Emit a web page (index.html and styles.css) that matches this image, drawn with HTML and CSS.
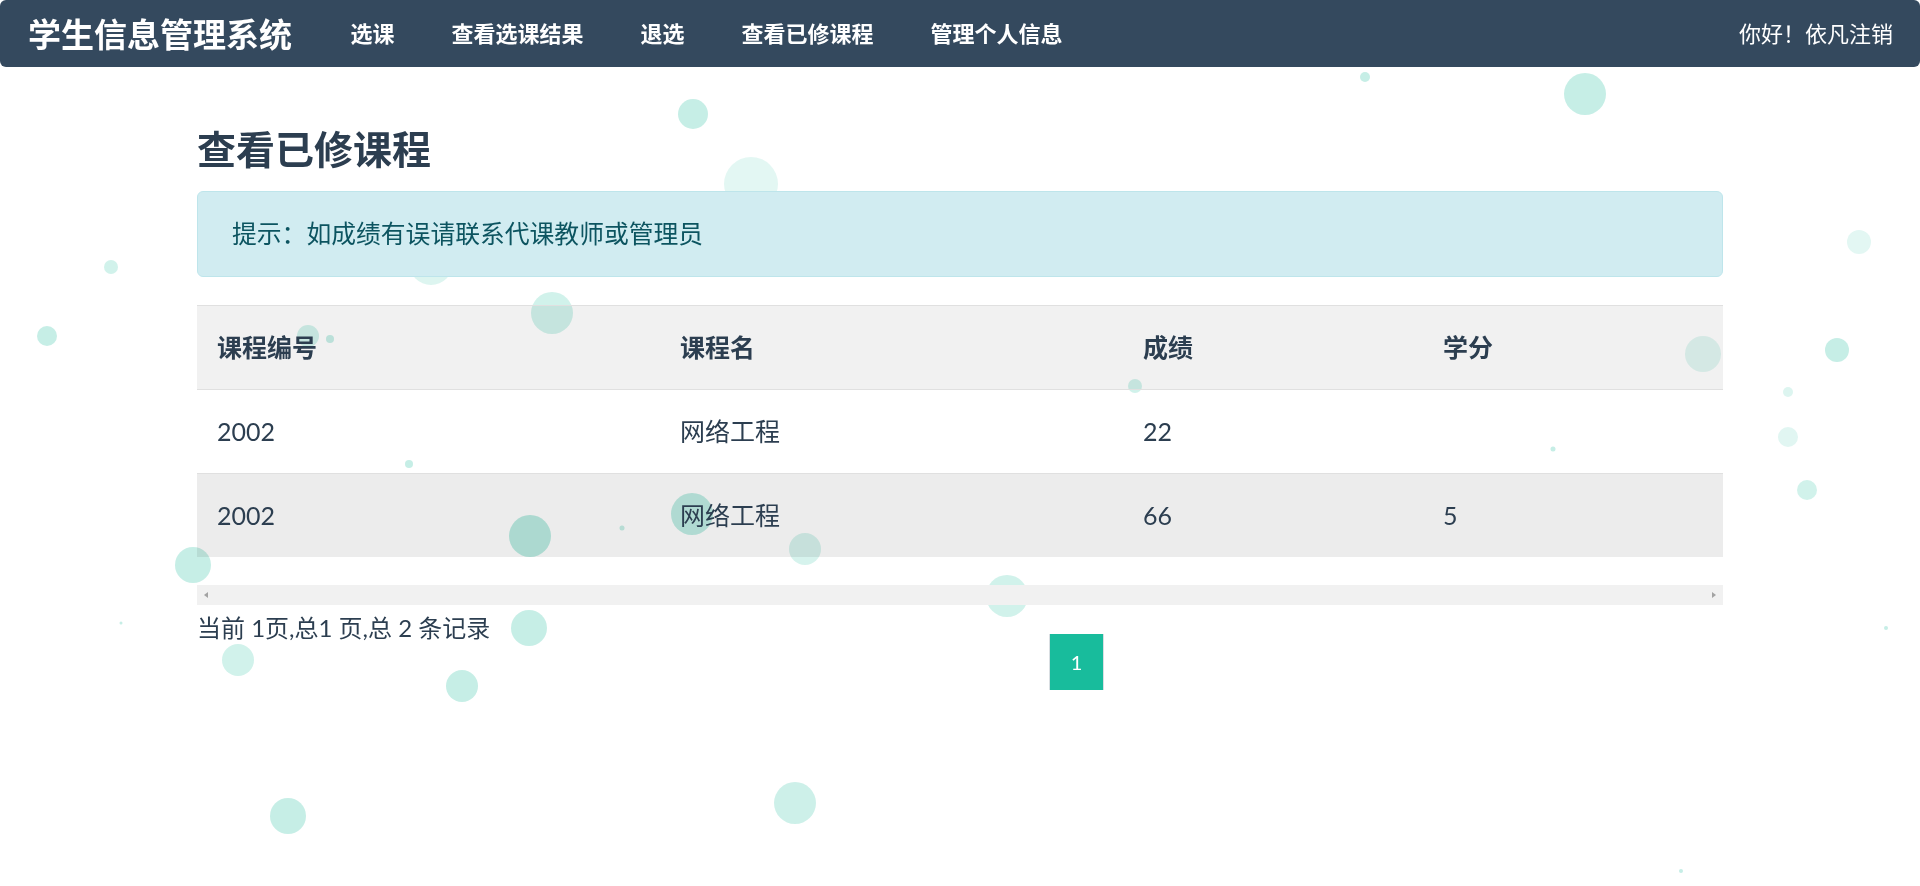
FILE: index.html
```html
<!DOCTYPE html>
<html lang="zh-CN">
<head>
<meta charset="utf-8">
<title>查看已修课程</title>
<link rel="stylesheet" href="styles.css">
</head>
<body>
<div class="bubbles" aria-hidden="true">
  <span class="bubble b1"></span><span class="bubble b2"></span><span class="bubble b3"></span>
  <span class="bubble b4"></span><span class="bubble b5"></span><span class="bubble b6"></span>
  <span class="bubble b7"></span><span class="bubble b8"></span><span class="bubble b9"></span>
  <span class="bubble b10"></span><span class="bubble b11"></span><span class="bubble b12"></span>
  <span class="bubble b13"></span><span class="bubble b14"></span><span class="bubble b15"></span>
  <span class="bubble b16"></span><span class="bubble b17"></span><span class="bubble b18"></span>
  <span class="bubble b19"></span><span class="bubble b20"></span><span class="bubble b21"></span>
  <span class="bubble b22"></span><span class="bubble b23"></span><span class="bubble b24"></span>
  <span class="bubble b25"></span><span class="bubble b26"></span><span class="bubble b27"></span>
  <span class="bubble b28"></span><span class="bubble b29"></span><span class="bubble b30"></span>
  <span class="bubble b31"></span><span class="bubble b32"></span><span class="bubble b33"></span>
</div>

<nav class="navbar">
  <a class="brand" href="#">学生信息管理系统</a>
  <ul class="nav">
    <li><a href="#">选课</a></li>
    <li><a href="#">查看选课结果</a></li>
    <li><a href="#">退选</a></li>
    <li><a href="#">查看已修课程</a></li>
    <li><a href="#">管理个人信息</a></li>
  </ul>
  <div class="user">你好！依凡<a href="#" class="logout">注销</a></div>
</nav>

<main class="container">
  <h2 class="title">查看已修课程</h2>
  <div class="alert">提示：如成绩有误请联系代课教师或管理员</div>

  <div class="table-wrap">
    <table class="table">
      <colgroup>
        <col class="c1"><col class="c2"><col class="c3"><col class="c4">
      </colgroup>
      <thead>
        <tr><th>课程编号</th><th>课程名</th><th>成绩</th><th>学分</th></tr>
      </thead>
      <tbody>
        <tr><td>2002</td><td>网络工程</td><td>22</td><td></td></tr>
        <tr class="alt"><td>2002</td><td>网络工程</td><td>66</td><td>5</td></tr>
      </tbody>
    </table>
  </div>
  <div class="scrollbar"><span class="arrow left"></span><span class="arrow right"></span></div>

  <div class="pager-row">
    <div class="pager-info">当前 1页,总1 页,总 2 条记录</div>
    <ul class="pagination">
      <li class="active"><a href="#">1</a></li>
    </ul>
  </div>
</main>
</body>
</html>
```

FILE: styles.css
```css
* { box-sizing: border-box; }
html, body { margin: 0; padding: 0; }
body {
  font-family: Lato, "Noto Sans CJK SC", sans-serif;
  font-size: 25px;
  color: #2c3e50;
  background: #fff;
}

/* decorative floating bubbles behind the page */
.bubbles {
  position: fixed;
  inset: 0;
  z-index: -1;
  overflow: hidden;
  pointer-events: none;
}
.bubble {
  position: absolute;
  border-radius: 50%;
  background: rgba(26, 188, 156, 0.25);
  transform: translate(-50%, -50%);
}
.b1  { left: 693px;  top: 114px; width: 30px; height: 30px; }
.b2  { left: 1585px; top: 94px;  width: 42px; height: 42px; }
.b3  { left: 1365px; top: 77px;  width: 10px; height: 10px; }
.b4  { left: 751px;  top: 184px; width: 54px; height: 54px; background: rgba(26,188,156,.12); }
.b5  { left: 431px;  top: 263px; width: 44px; height: 44px; background: rgba(26,188,156,.15); }
.b6  { left: 111px;  top: 267px; width: 14px; height: 14px; background: rgba(26,188,156,.2); }
.b7  { left: 47px;   top: 336px; width: 20px; height: 20px; }
.b8  { left: 552px;  top: 313px; width: 42px; height: 42px; background: rgba(26,188,156,.2); }
.b9  { left: 308px;  top: 336px; width: 22px; height: 22px; background: rgba(26,188,156,.2); }
.b10 { left: 330px;  top: 339px; width: 8px;  height: 8px; }
.b11 { left: 1703px; top: 354px; width: 36px; height: 36px; background: rgba(26,188,156,.13); }
.b12 { left: 1837px; top: 350px; width: 24px; height: 24px; }
.b13 { left: 1859px; top: 242px; width: 24px; height: 24px; background: rgba(26,188,156,.12); }
.b14 { left: 1135px; top: 386px; width: 14px; height: 14px; background: rgba(26,188,156,.2); }
.b15 { left: 1788px; top: 392px; width: 10px; height: 10px; background: rgba(26,188,156,.15); }
.b16 { left: 1788px; top: 437px; width: 20px; height: 20px; background: rgba(26,188,156,.13); }
.b17 { left: 409px;  top: 464px; width: 8px;  height: 8px; }
.b18 { left: 1553px; top: 449px; width: 5px;  height: 5px; }
.b19 { left: 1807px; top: 490px; width: 20px; height: 20px; background: rgba(26,188,156,.2); }
.b20 { left: 530px;  top: 536px; width: 42px; height: 42px; background: rgba(26,188,156,.3); }
.b21 { left: 692px;  top: 514px; width: 42px; height: 42px; background: rgba(26,188,156,.28); }
.b22 { left: 622px;  top: 528px; width: 5px;  height: 5px; }
.b23 { left: 805px;  top: 549px; width: 32px; height: 32px; background: rgba(26,188,156,.18); }
.b24 { left: 193px;  top: 565px; width: 36px; height: 36px; }
.b25 { left: 1007px; top: 596px; width: 42px; height: 42px; background: rgba(26,188,156,.2); }
.b26 { left: 529px;  top: 628px; width: 36px; height: 36px; }
.b27 { left: 238px;  top: 660px; width: 32px; height: 32px; background: rgba(26,188,156,.2); }
.b28 { left: 462px;  top: 686px; width: 32px; height: 32px; }
.b29 { left: 288px;  top: 816px; width: 36px; height: 36px; }
.b30 { left: 795px;  top: 803px; width: 42px; height: 42px; background: rgba(26,188,156,.22); }
.b31 { left: 121px;  top: 623px; width: 3px;  height: 3px; }
.b32 { left: 1886px; top: 628px; width: 4px;  height: 4px; }
.b33 { left: 1681px; top: 871px; width: 4px;  height: 4px; }

/* navbar */
.navbar {
  display: flex;
  align-items: center;
  height: 67px;
  padding: 0 27px 0 28px;
  background: #34495e;
  border-radius: 6px;
  color: #fff;
}
.brand {
  font-size: 33px;
  font-weight: 700;
  line-height: 66px;
  color: #fff;
  text-decoration: none;
  margin-right: 30px;
}
.nav {
  display: flex;
  list-style: none;
  margin: 0;
  padding: 0;
}
.nav a {
  display: block;
  padding: 0 28.5px;
  font-size: 22px;
  font-weight: 700;
  line-height: 66px;
  color: #fff;
  text-decoration: none;
}
.user {
  margin-left: auto;
  font-size: 22px;
  line-height: 66px;
  color: #fff;
}
.logout { color: #fff; text-decoration: none; }

/* content */
.container {
  width: 1526px;
  margin: 0 auto;
}
.title {
  margin: 61px 0 20px;
  font-size: 39px;
  font-weight: 700;
  line-height: 43px;
  color: #2c3e50;
}
.alert {
  padding: 23px 34px;
  font-size: 24.8px;
  line-height: 38px;
  background: #d1ecf1;
  border: 1px solid #bee5eb;
  border-radius: 6px;
  color: #0c5460;
  margin-bottom: 28px;
}

.table-wrap { width: 100%; }
.table {
  width: 100%;
  border-collapse: collapse;
  margin-bottom: 28px;
}
.c1 { width: 463px; }
.c2 { width: 463px; }
.c3 { width: 300px; }
.c4 { width: 300px; }
.table th, .table td {
  padding: 24px 20px;
  line-height: 35px;
  text-align: left;
  border-top: 1px solid #e0e0e0;
  color: #2c3e50;
}
.table th { font-weight: 700; }
.table thead tr { background: rgba(0, 0, 0, 0.055); }
.table tr.alt { background: rgba(0, 0, 0, 0.075); }

.scrollbar {
  display: flex;
  justify-content: space-between;
  align-items: center;
  height: 20px;
  background: #f1f1f1;
}
.arrow {
  display: block;
  width: 19px;
  height: 20px;
  position: relative;
}
.arrow::after {
  content: "";
  position: absolute;
  top: 6.5px;
  width: 0;
  height: 0;
  border-top: 3.5px solid transparent;
  border-bottom: 3.5px solid transparent;
}
.arrow.left::after { left: 7px; border-right: 4px solid #a3a3a3; }
.arrow.right::after { left: 8px; border-left: 4px solid #a3a3a3; }

.pager-row {
  display: flex;
  align-items: flex-start;
}
.pager-info {
  width: 852px;
  margin-top: 4px;
  font-size: 24px;
  line-height: 37px;
}
.pagination {
  list-style: none;
  margin: 29px 0 0;
  padding: 0;
}
.pagination a {
  display: flex;
  align-items: center;
  justify-content: center;
  width: 55px;
  height: 56px;
  background: #18bc9c;
  border-left: 1px solid #d9dee2;
  border-right: 1px solid #d9dee2;
  color: #fff;
  font-size: 20px;
  text-decoration: none;
}
```
